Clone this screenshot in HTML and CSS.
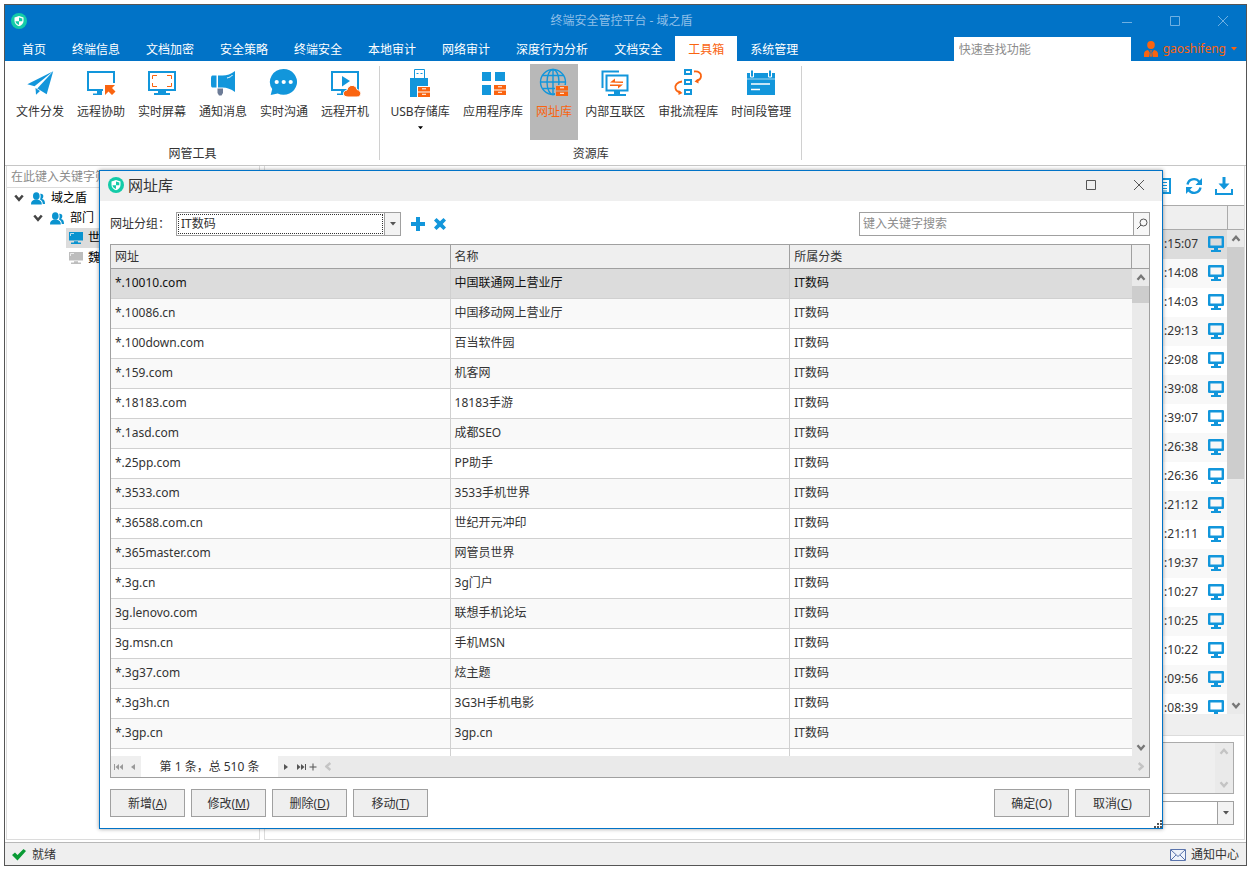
FILE: index.html
```html
<!DOCTYPE html>
<html lang="zh-CN">
<head>
<meta charset="utf-8">
<title>终端安全管控平台 - 域之盾</title>
<link rel="stylesheet" href="styles.css">
</head>
<body>
<svg class="defs" aria-hidden="true">
  <symbol id="logo" viewBox="0 0 16 16"><circle cx="8" cy="8" r="8" fill="#14cba8"/><path d="M8 3l4.500 1.500v3.500c0 2.600-2 4.300-4.500 5.300-2.500-1-4.500-2.700-4.500-5.300V4.500z" fill="#fff"/><path d="M8 4.500v3.700h3.300V5.500zM8 8.200H4.500C4.700 10 6 11.200 8 12z" fill="#14cba8"/></symbol>
  <symbol id="drawer" viewBox="0 0 12 10"><path d="M0 0h12v4.500H0zM0 5.500h12V10H0z" fill="#fa6410"/><path d="M4 1.800h4M4 7.300h4" stroke="#fff"/></symbol>
  <symbol id="users" viewBox="0 0 14 13"><g fill="#0a93cf"><ellipse cx="5.300" cy="4" rx="3.300" ry="3.800"/><path d="M0 12.500c0-3 1-4.300 4-5h2.600c3 .7 4.200 2 4.200 5z"/><path d="M9.200 1.800c2-.3 3.300.8 3.100 2.700-.1 1.200-.6 2-1.300 2.500 2.200.6 3 2 3 5h-2.200c-.1-2.300-1-3.800-2.800-4.500C9.700 6 10 3.500 9.200 1.800z"/></g></symbol>
  <symbol id="pc" viewBox="0 0 14 12"><path d="M0 0h14v8.500H0zM5 9.200h4v1.300h3V12H2v-1.500h3z"/><path d="M1.500 4V1.500H5" fill="none" stroke="#fff" opacity=".7"/></symbol>
  <symbol id="monitor" viewBox="0 0 16 16"><path d="M1.200 1.200h13.600v9.600H1.200z" fill="none" stroke="#1296db" stroke-width="2.400" stroke-linejoin="round"/><path d="M6 11h4v3h3v2H3v-2h3z" fill="#1296db"/></symbol>
  <symbol id="chev" viewBox="0 0 8 6"><path d="M1 1l3 3.500L7 1" fill="none" stroke="currentColor" stroke-width="2"/></symbol>
  <symbol id="caret" viewBox="0 0 6 4"><path d="M0 0h6L3 3.500z" fill="currentColor"/></symbol>
</svg>
<div class="window">
  <header class="titlebar">
    <svg class="logo"><use href="#logo"/></svg>
    <h1 class="app-title">终端安全管控平台 - 域之盾</h1>
    <div class="win-controls">
      <button aria-label="最小化"><svg viewBox="0 0 10 10"><path d="M0 6.500h10"/></svg></button>
      <button aria-label="最大化"><svg viewBox="0 0 10 10"><path d="M.5.5h9v9h-9z"/></svg></button>
      <button aria-label="关闭"><svg viewBox="0 0 10 10"><path d="M0 0l10 10M10 0L0 10"/></svg></button>
    </div>
  </header>
  <nav class="tabs">
    <button>首页</button><button>终端信息</button><button>文档加密</button><button>安全策略</button><button>终端安全</button><button>本地审计</button><button>网络审计</button><button>深度行为分析</button><button>文档安全</button><button class="active">工具箱</button><button>系统管理</button>
    <input class="quick" type="text" placeholder="快速查找功能" aria-label="快速查找功能">
    <button class="user"><svg class="user-icon" viewBox="0 0 14 16"><ellipse cx="7" cy="4" rx="3.800" ry="4"/><path d="M0 16v-3c0-2.500 1.500-3.500 4-4l3 4 3-4c2.500.5 4 1.500 4 4v3z"/><path d="M5.500 9h3L7.700 11l.8 5h-3l.8-5z" stroke="#0173c7" stroke-width=".7"/></svg><span>gaoshifeng</span><svg class="caret"><use href="#caret"/></svg></button>
  </nav>
  <div class="ribbon">
    <section class="group">
      <div class="tools">
        <button><svg class="big" viewBox="0 0 32 32"><g fill="#1296db"><path d="M3.300 17.300L29.200 4.300 10.500 19.300z"/><path d="M29.200 4.300L22.700 27.300l-9.400-5.800z"/><path d="M11.500 21l4.500 3-4 3.700z"/></g></svg><span>文件分发</span></button>
        <button><svg class="big" viewBox="0 0 32 32"><path d="M3 5h26v18H3z" fill="none" stroke="#1296db" stroke-width="2"/><path d="M12 24h5v4H8v-1.500h4z" fill="#1296db"/><path d="M18 16h13v13H18z" fill="#fff"/><path d="M20 18h10l-3 3 3.500 3.500-3.500 3.500-3.500-3.500-3.500 3.500z" fill="#fa6410"/></svg><span>远程协助</span></button>
        <button><svg class="big" viewBox="0 0 32 32"><path d="M3 5h26v18H3z" fill="none" stroke="#1296db" stroke-width="2"/><path d="M12 24h8v2h4v2H8v-2h4z" fill="#1296db"/><path d="M6.500 12V8.500H11M21 8.500h4.500V12M25.500 16v3.500H21M11 19.500H6.500V16" fill="none" stroke="#fa6410"/></svg><span>实时屏幕</span></button>
        <button><svg class="big" viewBox="0 0 32 32"><path d="M10.500 21.500H16V26l-1.500 2.500H12L10.500 26z" fill="#6c7b96"/><path d="M6 8.500h3.500v12H6c-2 0-2-1-2-6s0-6 2-6zM11 8.500h4.500C20 8.500 24 7 28 4v21c-4-3-8-4.500-12.500-4.500H11z" fill="#1296db"/><path d="M20 11c2.500-.6 4.500-1.500 5.500-3" fill="none" stroke="#fff"/></svg><span>通知消息</span></button>
        <button><svg class="big" viewBox="0 0 32 32"><path d="M15.700 2a13.600 12.900 0 1 1-6 24.600L2.700 28l1.500-6A13.600 12.900 0 0 1 15.700 2z" fill="#1296db"/><g fill="#fff"><circle cx="8.700" cy="15" r="2.100"/><circle cx="15.700" cy="15" r="2.100"/><circle cx="22.700" cy="15" r="2.100"/></g></svg><span>实时沟通</span></button>
        <button><svg class="big" viewBox="0 0 32 32"><path d="M3 5h26v18H3z" fill="none" stroke="#1296db" stroke-width="2"/><path d="M12 24h5v4H8v-1.500h4zM13 9l8 5-8 5.500z" fill="#1296db"/><path d="M19 30c-6 0-6-6-1-7 1-6 9-6 10-.5 5 1 5 7.500 0 7.500z" fill="#fa6410" stroke="#fff" stroke-width="1"/></svg><span>远程开机</span></button>
      </div>
      <h2>网管工具</h2>
    </section>
    <section class="group">
      <div class="tools">
        <button><svg class="big" viewBox="0 0 32 32"><path d="M10.500 11V2.500h10V11" fill="#fff" stroke="#1296db"/><path d="M12.500 6.500h2M16.500 6.500h2" stroke="#1296db"/><path d="M6 11h18v19H6z" fill="#1296db"/><path d="M13 19h14v12H13z" fill="#fff"/><use href="#drawer" x="14" y="20" width="12" height="10"/></svg><span>USB存储库</span><svg class="drop"><use href="#caret"/></svg></button>
        <button><svg class="big" viewBox="0 0 32 32"><path d="M5 5h9v9H5zM18 5h10v9H18zM5 18h9v10H5z" fill="#1296db"/><use href="#drawer" x="17" y="18" width="12" height="10"/></svg><span>应用程序库</span></button>
        <button class="selected"><svg class="big" viewBox="0 0 32 32"><g fill="none" stroke="#1296db" stroke-width="1.400"><circle cx="15" cy="15" r="12.500"/><ellipse cx="15" cy="15" rx="6" ry="12.500"/><path d="M15 2.500v25M2.500 15h25M4.500 8.500h21M4.500 21.500h21"/></g><path d="M17 18h14v12H17z" fill="#b8b8b8"/><use href="#drawer" x="18" y="19" width="12" height="10"/></svg><span>网址库</span></button>
        <button><svg class="big" viewBox="0 0 32 32"><g fill="none" stroke="#1296db"><path d="M3.500 21V4.500H20" stroke-width="2"/><path d="M7.500 8.500h21v15h-21z" stroke-width="2"/></g><path d="M15 24h6v3h6v2H9v-2h6z" fill="#1296db"/><path d="M11 15.500l5-4v3h8v1.500zM24 17.500l-5 4v-2.500h-8v-1.500z" fill="#fa6410"/></svg><span>内部互联区</span></button>
        <button><svg class="big" viewBox="0 0 32 32"><g fill="none" stroke="#1296db" stroke-width="2"><path d="M13 3h6v4h-6zM13 13h6v4h-6zM13 23h6v4h-6z"/></g><g fill="none" stroke="#fa6410" stroke-width="1.800"><path d="M22 4.500c5-.5 7.500 2 7 5-.3 2-2 4-5 4.500M10 14.500c-5 .5-7.500 4-6.500 7 .7 2.500 2.500 3.500 5 4"/></g><path d="M22.500 14.500l4-3v5zM10.500 26l-4 2v-5z" fill="#fa6410"/></svg><span>审批流程库</span></button>
        <button><svg class="big" viewBox="0 0 32 32"><path d="M2 6h28v22H2z" fill="#1296db"/><path d="M5.500 3h3v7h-3zM23.500 3h3v7h-3z" fill="#1296db" stroke="#fff"/><path d="M2 12h28" stroke="#fff" stroke-width=".6"/><path d="M6 17h19M6 22.500h9" stroke="#fff" stroke-width="1.600"/></svg><span>时间段管理</span></button>
      </div>
      <h2>资源库</h2>
    </section>
  </div>
  <main class="workspace">
    <aside class="tree-pane">
      <input class="tree-filter" type="text" placeholder="在此键入关键字筛" aria-label="筛选">
      <ul class="tree">
        <li><svg class="fold"><use href="#chev"/></svg><svg class="people"><use href="#users"/></svg>域之盾</li>
        <li class="level2"><svg class="fold"><use href="#chev"/></svg><svg class="people"><use href="#users"/></svg>部门</li>
        <li class="level3 current"><svg class="pc"><use href="#pc"/></svg>世</li>
        <li class="level3"><svg class="pc off"><use href="#pc"/></svg>魏</li>
      </ul>
    </aside>
    <section class="log-pane">
      <div class="log-tools">
        <button aria-label="列表"><svg viewBox="0 0 18 18"><path d="M2 2h13v14H2z" fill="none" stroke="#1296db" stroke-width="2"/><path d="M6 5.500h6M6 8.500h6M6 11.500h6M6 14h6" stroke="#1296db"/></svg></button>
        <button aria-label="刷新"><svg viewBox="0 0 18 18"><path d="M2.500 7.500c1-5.500 8-7.500 12-2.500M15.500 10.500c-1 5.500-8 7.500-12 2.500" fill="none" stroke="#1296db" stroke-width="2.400"/><path d="M17 1v7h-6.500zM1 17v-7h6.500z" fill="#1296db"/></svg></button>
        <button aria-label="下载"><svg viewBox="0 0 18 18"><path d="M7.500 0h3v6.500h4L9 12.500 3.500 6.500h4z" fill="#1296db"/><path d="M1 12v5h16v-5" fill="none" stroke="#1296db" stroke-width="2"/></svg></button>
      </div>
      <div class="log-grid">
        <div class="log-head"></div><div class="log-head cap"></div>
        <ol class="log">
          <li class="current">:15:07<svg><use href="#monitor"/></svg></li>
          <li>:14:08<svg><use href="#monitor"/></svg></li>
          <li>:14:03<svg><use href="#monitor"/></svg></li>
          <li>:29:13<svg><use href="#monitor"/></svg></li>
          <li>:29:08<svg><use href="#monitor"/></svg></li>
          <li>:39:08<svg><use href="#monitor"/></svg></li>
          <li>:39:07<svg><use href="#monitor"/></svg></li>
          <li>:26:38<svg><use href="#monitor"/></svg></li>
          <li>:26:36<svg><use href="#monitor"/></svg></li>
          <li>:21:12<svg><use href="#monitor"/></svg></li>
          <li>:21:11<svg><use href="#monitor"/></svg></li>
          <li>:19:37<svg><use href="#monitor"/></svg></li>
          <li>:10:27<svg><use href="#monitor"/></svg></li>
          <li>:10:25<svg><use href="#monitor"/></svg></li>
          <li>:10:22<svg><use href="#monitor"/></svg></li>
          <li>:09:56<svg><use href="#monitor"/></svg></li>
          <li>:08:39<svg><use href="#monitor"/></svg></li>
        </ol>
        <div class="vscroll"><svg class="chev up"><use href="#chev"/></svg><div class="thumb log-thumb"></div><svg class="chev"><use href="#chev"/></svg></div>
      </div>
      <div class="log-strip"></div>
      <div class="log-form">
        <div class="memo"><textarea disabled aria-label="内容"></textarea><div class="vscroll dim"><svg class="chev up"><use href="#chev"/></svg><svg class="chev"><use href="#chev"/></svg></div></div>
        <div class="combo"><select aria-label="选项"><option></option></select><span class="combo-btn"><svg class="caret"><use href="#caret"/></svg></span></div>
      </div>
    </section>

    <div class="dialog" role="dialog" aria-labelledby="dlg-title">
      <header class="dlg-head">
        <svg class="logo"><use href="#logo"/></svg>
        <h2 id="dlg-title">网址库</h2>
        <div class="win-controls">
          <button aria-label="最大化"><svg viewBox="0 0 10 10"><path d="M.5.5h9v9h-9z"/></svg></button>
          <button aria-label="关闭"><svg viewBox="0 0 10 10"><path d="M0 0l10 10M10 0L0 10"/></svg></button>
        </div>
      </header>
      <div class="dlg-body">
        <div class="filter">
          <label for="grp">网址分组：</label>
          <div class="combo focus"><select id="grp"><option>IT数码</option></select><span class="combo-btn"><svg class="caret"><use href="#caret"/></svg></span></div>
          <button class="mini" aria-label="添加"><svg viewBox="0 0 14 14"><path d="M5 0h4v5h5v4H9v5H5V9H0V5h5z"/></svg></button>
          <button class="mini" aria-label="移除"><svg viewBox="0 0 14 14"><path d="M1 3.500L3.500 1 7 4.300 10.500 1 13 3.500 9.700 7l3.300 3.500-2.500 2.500L7 9.700 3.500 13 1 10.500 4.300 7z"/></svg></button>
          <div class="search"><input type="text" placeholder="键入关键字搜索" aria-label="键入关键字搜索"><button aria-label="搜索"><svg viewBox="0 0 12 12"><circle cx="7.500" cy="4.500" r="3.500"/><path d="M5 7L1 11"/></svg></button></div>
        </div>
        <div class="grid">
          <div class="grid-main">
            <div class="table-clip">
              <table>
                <colgroup><col class="c1"><col class="c1"><col></colgroup>
                <thead><tr><th>网址</th><th>名称</th><th>所属分类</th></tr></thead>
                <tbody>
                  <tr class="current"><td>*.10010.com</td><td>中国联通网上营业厅</td><td>IT数码</td></tr>
                  <tr><td>*.10086.cn</td><td>中国移动网上营业厅</td><td>IT数码</td></tr>
                  <tr><td>*.100down.com</td><td>百当软件园</td><td>IT数码</td></tr>
                  <tr><td>*.159.com</td><td>机客网</td><td>IT数码</td></tr>
                  <tr><td>*.18183.com</td><td>18183手游</td><td>IT数码</td></tr>
                  <tr><td>*.1asd.com</td><td>成都SEO</td><td>IT数码</td></tr>
                  <tr><td>*.25pp.com</td><td>PP助手</td><td>IT数码</td></tr>
                  <tr><td>*.3533.com</td><td>3533手机世界</td><td>IT数码</td></tr>
                  <tr><td>*.36588.com.cn</td><td>世纪开元冲印</td><td>IT数码</td></tr>
                  <tr><td>*.365master.com</td><td>网管员世界</td><td>IT数码</td></tr>
                  <tr><td>*.3g.cn</td><td>3g门户</td><td>IT数码</td></tr>
                  <tr><td>3g.lenovo.com</td><td>联想手机论坛</td><td>IT数码</td></tr>
                  <tr><td>3g.msn.cn</td><td>手机MSN</td><td>IT数码</td></tr>
                  <tr><td>*.3g37.com</td><td>炫主题</td><td>IT数码</td></tr>
                  <tr><td>*.3g3h.cn</td><td>3G3H手机电影</td><td>IT数码</td></tr>
                  <tr><td>*.3gp.cn</td><td>3gp.cn</td><td>IT数码</td></tr>
                  <tr><td></td><td></td><td></td></tr>
                </tbody>
              </table>
            </div>
            <div class="grid-side"><div class="side-cap"></div><div class="vscroll"><svg class="chev up"><use href="#chev"/></svg><div class="thumb"></div><svg class="chev"><use href="#chev"/></svg></div></div>
          </div>
          <div class="pager">
            <div class="pager-nav off">
              <button aria-label="首条"><svg viewBox="0 0 10 8"><path d="M0 1h1v6H0zM5 1v6L1.500 4zM9 1v6L5.500 4z"/></svg></button>
              <button aria-label="上一条"><svg viewBox="0 0 10 8"><path d="M6 1v6L2 4z"/></svg></button>
            </div>
            <span class="pager-text">第 1 条，总 510 条</span>
            <div class="pager-nav next">
              <button aria-label="下一条"><svg viewBox="0 0 10 8"><path d="M3 1v6l4-3z"/></svg></button>
              <button aria-label="末条"><svg viewBox="0 0 10 8"><path d="M9 1h1v6H9zM1 1v6l3.500-3zM5 1v6l3.500-3z"/></svg></button>
              <button class="plus" aria-label="追加"><svg viewBox="0 0 10 8"><path d="M4.500.5h1v3h3v1h-3v3h-1v-3h-3v-1h3z"/></svg></button>
            </div>
            <div class="hscroll"><svg class="chev left"><use href="#chev"/></svg><svg class="chev right"><use href="#chev"/></svg></div>
          </div>
        </div>
        <footer class="actions">
          <button>新增(<u>A</u>)</button><button>修改(<u>M</u>)</button><button>删除(<u>D</u>)</button><button>移动(<u>T</u>)</button>
          <button class="ok">确定(O)</button><button>取消(<u>C</u>)</button>
        </footer>
      </div>
      <svg class="grip" viewBox="0 0 8 8"><path d="M6 0h2v2H6zM3 3h2v2H3zM6 3h2v2H6zM0 6h2v2H0zM3 6h2v2H3zM6 6h2v2H6z" fill="#555"/></svg>
    </div>
  </main>
  <footer class="statusbar">
    <svg class="tick" viewBox="0 0 14 12"><path d="M0 6l3-2.500 2.500 2.500L11.500 0 14 2 5.500 11.500z" fill="#0a9b35"/></svg><span>就绪</span>
    <button class="notice"><svg class="mail" viewBox="0 0 16 12"><path d="M.5.500h15v11H.5z" fill="#eef2fa" stroke="#5a74ac"/><path d="M1 1l7 6.500L15 1M1 11l5-5M15 11l-5-5" fill="none" stroke="#5a74ac"/></svg><span>通知中心</span></button>
  </footer>
</div>
</body>
</html>
```
FILE: styles.css
```css
* { box-sizing: border-box; }
body {
  margin: 0;
  padding: 4px;
  height: 100vh;
  background: #fff;
  color: #333;
  font: 12px/16px "Noto Sans", "Noto Sans CJK SC", sans-serif;
}
button, input, select, textarea {
  font: inherit;
  color: inherit;
  margin: 0;
  padding: 0;
  border: 0;
  border-radius: 0;
  background: none;
  outline: 0;
}
h1, h2 { margin: 0; font-size: 12px; font-weight: 400; }
ul, ol { margin: 0; padding: 0; list-style: none; }
svg { display: block; flex: none; }
select { appearance: none; }
::placeholder { color: #8c8c8c; opacity: 1; }
.defs { position: absolute; width: 0; height: 0; }
.logo { width: 16px; height: 16px; }
.caret { width: 6px; height: 4px; }

.window {
  height: 100%;
  display: flex;
  flex-direction: column;
  border: 1px solid #555;
  background: #fff;
}

/* title bar */
.titlebar {
  flex: none;
  height: 31px;
  padding: 0 14px 0 6px;
  display: grid;
  grid-template-columns: 1fr auto 1fr;
  align-items: center;
  background: #0173c7;
}
.app-title { color: #8fbfe8; }
.win-controls { display: flex; justify-content: flex-end; gap: 30px; }
.win-controls button { padding: 4px; }
.win-controls svg { width: 10px; height: 10px; fill: none; stroke: #555; }
.titlebar .win-controls svg { stroke: #6fb0e2; }

/* tabs */
.tabs {
  flex: none;
  height: 25px;
  display: flex;
  padding: 0 9px 0 4px;
  background: #0173c7;
  color: #fff;
}
.tabs button { padding: 2px 13px 0; flex: none; }
.tabs .active { background: #fff; color: #fa6410; }
.tabs .quick {
  width: 177px;
  height: 24px;
  margin-top: 1px;
  margin-left: auto;
  padding: 0 5px;
  background: #fff;
  color: #333;
}
.tabs .user {
  display: flex;
  align-items: center;
  gap: 5px;
  padding: 0 0 0 13px;
  color: #fa6410;
}
.user-icon { width: 14px; height: 16px; fill: #fa6410; }

/* ribbon */
.ribbon {
  flex: none;
  height: 105px;
  display: flex;
  border-bottom: 1px solid #c6c6c6;
}
.group {
  display: flex;
  flex-direction: column;
  padding: 3px 4px 0;
  text-align: center;
  border-right: 1px solid;
  border-image: linear-gradient(#fff 6px, #d0d0d0 6px, #d0d0d0 98px, #fff 98px) 1;
}
.group:first-child { padding-left: 5px; }
.tools { display: flex; gap: 1px; }
.tools button {
  height: 76px;
  padding: 3px 6px 0;
  display: flex;
  flex-direction: column;
  align-items: center;
}
.tools span { margin-top: 5px; white-space: nowrap; }
.group + .group button:first-child { min-width: 72px; }
.tools .selected { background: #b8b8b8; color: #fa6410; }
.big { width: 32px; height: 32px; }
.drop { width: 5px; height: 4px; margin-top: 6px; color: #000; }
.group h2 { margin-top: 6px; }

/* workspace */
.workspace {
  position: relative;
  flex: 1;
  min-height: 0;
  display: flex;
  gap: 4px;
  padding: 0 1px 2px;
}
.tree-pane { width: 254px; flex: none; border: 1px solid #dcdcdc; border-top: 0; }
.tree-filter {
  width: 100%;
  height: 22px;
  padding: 0 4px;
  border-bottom: 1px solid #dcdcdc;
}
.tree li {
  height: 20px;
  display: flex;
  align-items: center;
  padding-left: 7px;
  color: #000;
}
.tree .level2 { padding-left: 26px; }
.tree .level3 { margin-left: 59px; padding-left: 3px; }
.tree .current { background: #dcdcdc; }
.fold { width: 10px; height: 8px; margin-right: 7px; color: #444; }
.people { width: 14px; height: 13px; margin-right: 6px; }
.pc { width: 14px; height: 12px; margin-right: 5px; fill: #0a93cf; }
.pc.off { fill: #bdbdbd; }

.log-pane {
  flex: 1;
  min-width: 0;
  display: flex;
  flex-direction: column;
  border: 1px solid #dcdcdc;
  border-top: 0;
}
.log-tools {
  height: 39px;
  display: flex;
  justify-content: flex-end;
  align-items: center;
  gap: 12px;
  padding: 1px 11px 0 0;
}
.log-tools svg { width: 18px; height: 18px; }
.log-grid {
  flex: 1;
  min-height: 0;
  display: grid;
  grid-template: 25px 1fr / 1fr 17px;
}
.log-head { background: #efefef; border: 1px solid #ababab; border-width: 1px 0; }
.log-head.cap { border-left-width: 1px; }
.log { min-height: 0; overflow: hidden; line-height: 12px; }
.log li {
  height: 29px;
  display: flex;
  align-items: center;
  justify-content: flex-end;
  gap: 10px;
  padding: 0 3px 2px 0;
}
.log li:nth-child(even) { background: #f8f8f8; }
.log li.current { background: #dcdcdc; }
.log svg { width: 16px; height: 16px; }
.vscroll {
  min-height: 0;
  display: flex;
  flex-direction: column;
  align-items: center;
  justify-content: space-between;
  padding: 5px 0;
  background: #eaeaea;
  color: #777;
}
.chev { width: 10px; height: 7px; }
.chev.up { transform: rotate(180deg); }
.chev.left { transform: rotate(90deg); }
.chev.right { transform: rotate(-90deg); }
.thumb { width: 100%; height: 17px; margin: 5px 0 auto; background: #cdcdcd; }
.log-thumb { height: 49%; }
.log-strip { height: 22px; background: #efefef; border-bottom: 1px solid #dcdcdc; }
.log-form { padding: 6px 10px 14px; display: grid; gap: 7px; }
.memo { height: 52px; display: flex; border: 1px solid #ababab; background: #efefef; }
.memo textarea { flex: 1; min-width: 0; resize: none; }
.vscroll.dim { width: 18px; color: #c4c4c4; }
.combo { height: 24px; display: flex; border: 1px solid #a0a0a0; background: #fff; }
.combo select { flex: 1; min-width: 0; padding: 0 3px; }
.combo-btn {
  width: 16px;
  display: grid;
  place-items: center;
  border-left: 1px solid #a0a0a0;
  background: #f3f3f3;
  color: #555;
  pointer-events: none;
}

/* dialog */
.dialog {
  position: absolute;
  top: 4px;
  right: 83px;
  bottom: 13px;
  left: 94px;
  display: flex;
  flex-direction: column;
  border: 1px solid #0173c7;
  background: #fff;
  box-shadow: 0 0 4px rgba(0, 0, 0, .4);
}
.dlg-head {
  flex: none;
  height: 30px;
  display: flex;
  align-items: center;
  padding: 0 14px 2px 8px;
  background: #efefef;
}
.dlg-head h2 { margin-left: 4px; font-size: 15px; line-height: 20px; }
.dlg-head .win-controls { margin-left: auto; }
.dlg-body {
  flex: 1;
  min-height: 0;
  display: flex;
  flex-direction: column;
  padding: 11px 12px 11px 10px;
}
.filter { flex: none; display: flex; align-items: center; height: 24px; }
.filter label { width: 66px; }
.filter .combo { width: 225px; margin-right: 10px; }
.combo.focus select { margin: 1px; padding: 0 2px; border: 1px dotted #333; }
.mini { padding: 0 4px 0 0; margin-right: 4px; }
.mini svg { width: 14px; height: 14px; fill: #1296db; }
.search {
  width: 291px;
  height: 24px;
  display: flex;
  margin-left: auto;
  border: 1px solid #a0a0a0;
}
.search input { flex: 1; min-width: 0; padding: 0 3px; }
.search button {
  width: 16px;
  display: grid;
  place-items: center;
  border-left: 1px solid #a0a0a0;
  background: #f7f7f7;
}
.search svg { width: 12px; height: 12px; fill: none; stroke: #555; }

.grid {
  flex: 1;
  min-height: 0;
  display: flex;
  flex-direction: column;
  margin: 8px 0 11px;
  border: 1px solid #a0a0a0;
}
.grid-main { flex: 1; min-height: 0; display: flex; }
.table-clip { flex: 1; min-width: 0; overflow: hidden; }
table { width: 100%; table-layout: fixed; border-collapse: separate; border-spacing: 0; }
.c1 { width: 33.26%; }
th {
  height: 24px;
  padding: 0 4px;
  text-align: left;
  font-weight: 400;
  background: #efefef;
  border: solid #a0a0a0;
  border-width: 0 1px 1px 0;
}
td {
  height: 30px;
  padding: 0 4px 2px;
  border: solid #d0d0d0;
  border-width: 0 1px 1px 0;
}
td:last-child { border-right: 0; }
tbody tr:nth-child(even) { background: #f9f9f9; }
tbody .current { background: #dcdcdc; color: #111; }
.grid-side { width: 17px; display: flex; flex-direction: column; }
.side-cap { height: 24px; background: #efefef; border-bottom: 1px solid #a0a0a0; }
.grid-side .vscroll { flex: 1; }
.pager { flex: none; height: 21px; display: flex; background: #fff; }
.pager-nav { display: flex; align-items: center; background: #efefef; color: #555; }
.pager-nav.off { width: 30px; color: #999; }
.pager-nav button { width: 15px; padding-left: 3px; }
.pager-nav.next { width: 42px; }
.pager-nav .plus { width: 12px; padding-left: 0; }
.pager-nav svg { width: 10px; height: 8px; fill: currentColor; }
.pager-text { width: 137px; line-height: 21px; text-align: center; }
.hscroll {
  flex: 1;
  display: flex;
  align-items: center;
  justify-content: space-between;
  padding: 0 3px;
  background: #eaeaea;
  color: #c4c4c4;
}
.actions { flex: none; display: flex; gap: 6px; }
.actions button {
  width: 75px;
  height: 28px;
  padding-top: 2px;
  border: 1px solid #a0a0a0;
  background: #efefef;
}
.actions .ok { margin-left: auto; }
.grip { position: absolute; right: 0; bottom: 0; width: 8px; height: 8px; }

/* status bar */
.statusbar {
  flex: none;
  height: 23px;
  display: flex;
  align-items: center;
  gap: 6px;
  padding: 1px 7px 0;
  border-top: 1px solid #b8b8b8;
  background: #efefef;
}
.tick { width: 14px; height: 12px; }
.notice { display: flex; align-items: center; gap: 5px; margin-left: auto; }
.mail { width: 16px; height: 12px; }
```
